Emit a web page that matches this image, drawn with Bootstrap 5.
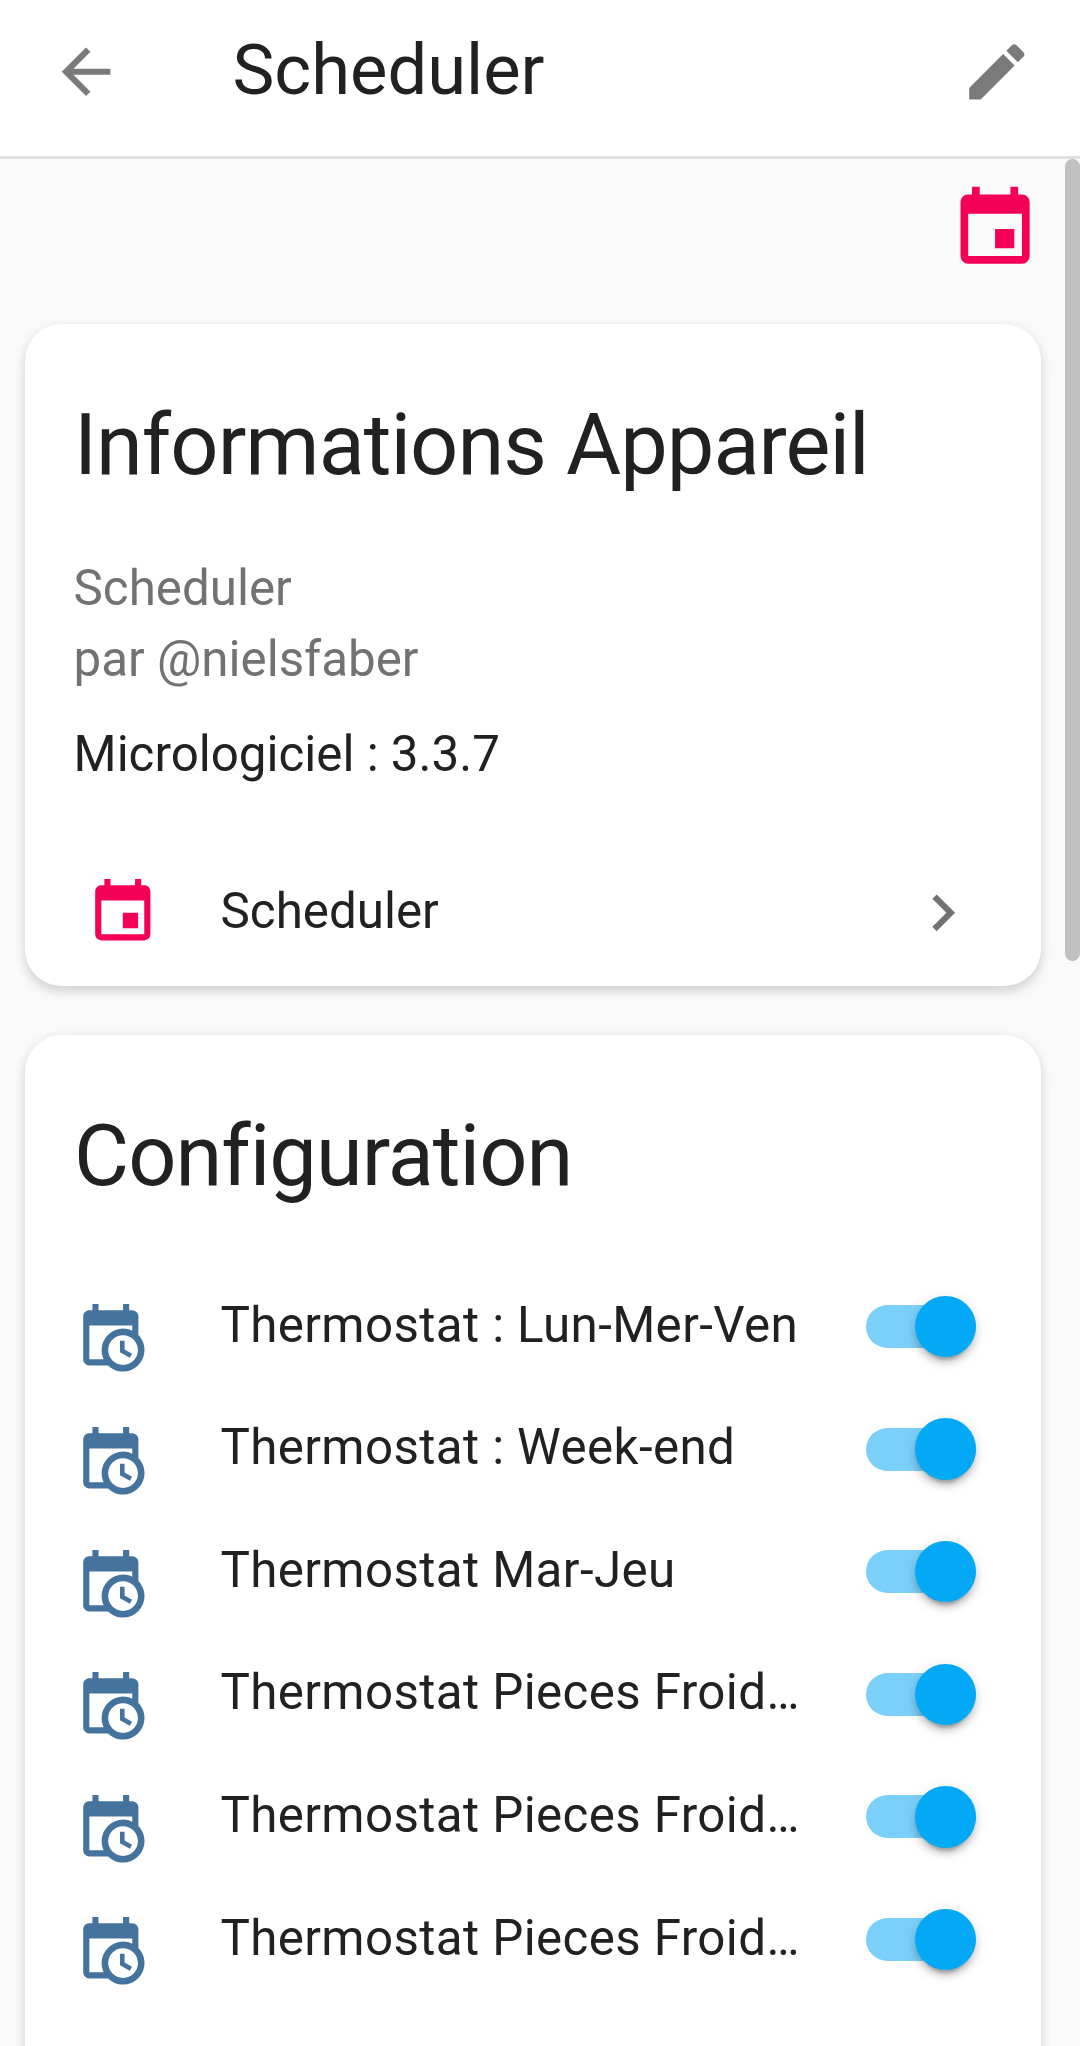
<!DOCTYPE html>
<html lang="fr">
<head>
<meta charset="utf-8">
<meta name="viewport" content="width=device-width, initial-scale=1">
<title>Scheduler</title>
<link href="https://cdn.jsdelivr.net/npm/bootstrap@5.3.0/dist/css/bootstrap.min.css" rel="stylesheet">
<style>
  body { font-family: Roboto, "Noto Sans", sans-serif; color: #212121; background: #fafafa; height: 2046px; font-size: 49.3px; line-height: 71px; }
  .topbar { height: 159px; border-bottom: 3px solid #e0e0e0; padding: 34.8px 46.7px 0 49.2px; }
  .topbar-title { font-size: 70.5px; line-height: 72px; margin: -1px 0 0 109.7px; }
  .glyph { width: 73.6px; height: 73.6px; fill: currentColor; flex: none; }
  .glyph-lg { width: 92.2px; height: 92.2px; }
  .soft { color: #7a7a7a; }
  .muted-text { color: #727272; }
  .pink { color: #f50057; }
  .steel { color: #44739e; }
  .page-body { height: 1887px; }
  .column-area { width: 1065px; padding: 0 24px 0 25px; }
  .integration-icon { height: 165px; padding-top: 23.7px; }
  .panel { background: #fff; border-radius: 36.8px; padding-top: 71px; box-shadow: 0 6px 12px rgba(0,0,0,.13), 0 2px 12px rgba(0,0,0,.06); }
  .panel + .panel { margin-top: 49px; }
  .panel-title { font-size: 84.7px; line-height: 100px; font-weight: 400; letter-spacing: -.0115em; padding-left: 49px; margin: 0; }
  .about { padding: 58px 48.6px 0; }
  .firmware { margin-top: 24px; }
  .device-row { padding: 85.8px 61px 36.7px; }
  .device-name { margin: -2px 0 0 61px; }
  .entities { padding-top: 58.3px; }
  .entity { height: 122.6px; padding: 0 65px 0 48.8px; }
  .entity .glyph { margin-top: 25px; }
  .entity-name { margin: -1px 0 0 73px; width: 584px; letter-spacing: .0079em; }
  .toggle { width: 110.5px; height: 43px; border-radius: 22px; background: #7bd0fa; position: relative; margin-top: 1.5px; }
  .toggle::after { content: ""; position: absolute; right: 0; top: -9.2px; width: 61.4px; height: 61.4px; border-radius: 50%; background: #03a9f4;
    box-shadow: 0 9px 3px -6px rgba(0,0,0,.2), 0 6px 6px rgba(0,0,0,.14), 0 3px 15px rgba(0,0,0,.12); }
  .scroll-thumb { width: 15px; height: 802px; border-radius: 8px; background: #c1c1c1; }
</style>
<script src="https://cdn.jsdelivr.net/npm/bootstrap@5.3.0/dist/js/bootstrap.bundle.min.js"></script>
</head>
<body class="overflow-hidden">
<svg class="d-none">
  <symbol id="calendar" viewBox="0 0 24 24"><path d="M19,19H5V8H19M16,1V3H8V1H6V3H5C3.89,3 3,3.89 3,5V19A2,2 0 0,0 5,21H19A2,2 0 0,0 21,19V5C21,3.89 20.1,3 19,3H18V1M17,12H12V17H17V12Z"/></symbol>
  <symbol id="calendar-clock" viewBox="0 0 24 24"><path d="M15,13H16.5V15.82L18.94,17.23L18.19,18.53L15,16.69V13M19,8H5V19H9.67C9.24,18.09 9,17.07 9,16A7,7 0 0,1 16,9C17.07,9 18.09,9.24 19,9.67V8M5,21C3.89,21 3,20.1 3,19V5C3,3.89 3.89,3 5,3H6V1H8V3H16V1H18V3H19A2,2 0 0,1 21,5V11.1C22.24,12.36 23,14.09 23,16A7,7 0 0,1 16,23C14.09,23 12.36,22.24 11.1,21H5M16,11.15A4.85,4.85 0 0,0 11.15,16C11.15,18.68 13.32,20.85 16,20.85A4.85,4.85 0 0,0 20.85,16C20.85,13.32 18.68,11.15 16,11.15Z"/></symbol>
</svg>

<header class="topbar d-flex align-items-start bg-white">
  <svg class="glyph soft" viewBox="0 0 24 24"><path d="M20,11V13H8L13.5,18.5L12.08,19.92L4.16,12L12.08,4.08L13.5,5.5L8,11H20Z"/></svg>
  <div class="topbar-title flex-grow-1">Scheduler</div>
  <svg class="glyph soft" viewBox="0 0 24 24"><path d="M20.71,7.04C21.1,6.65 21.1,6 20.71,5.63L18.37,3.29C18,2.9 17.35,2.9 16.96,3.29L15.12,5.12L18.87,8.87M3,17.25V21H6.75L17.81,9.93L14.06,6.18L3,17.25Z"/></svg>
</header>

<div class="page-body d-flex">
  <main class="column-area flex-shrink-0">
    <div class="integration-icon d-flex justify-content-end">
      <svg class="glyph glyph-lg pink"><use href="#calendar"/></svg>
    </div>

    <section class="panel">
      <h1 class="panel-title">Informations Appareil</h1>
      <div class="about">
        <div class="muted-text">Scheduler</div>
        <div class="muted-text">par @nielsfaber</div>
        <div class="firmware">Micrologiciel : 3.3.7</div>
      </div>
      <div class="device-row d-flex align-items-center">
        <svg class="glyph pink"><use href="#calendar"/></svg>
        <div class="device-name flex-grow-1">Scheduler</div>
        <svg class="glyph muted-text" viewBox="0 0 24 24"><path d="M8.59,16.58L13.17,12L8.59,7.41L10,6L16,12L10,18L8.59,16.58Z"/></svg>
      </div>
    </section>

    <section class="panel">
      <h1 class="panel-title">Configuration</h1>
      <div class="entities">
        <div class="entity d-flex align-items-center"><svg class="glyph steel"><use href="#calendar-clock"/></svg><div class="entity-name text-truncate">Thermostat : Lun-Mer-Ven</div><div class="toggle ms-auto" role="switch" aria-checked="true"></div></div>
        <div class="entity d-flex align-items-center"><svg class="glyph steel"><use href="#calendar-clock"/></svg><div class="entity-name text-truncate">Thermostat : Week-end</div><div class="toggle ms-auto" role="switch" aria-checked="true"></div></div>
        <div class="entity d-flex align-items-center"><svg class="glyph steel"><use href="#calendar-clock"/></svg><div class="entity-name text-truncate">Thermostat Mar-Jeu</div><div class="toggle ms-auto" role="switch" aria-checked="true"></div></div>
        <div class="entity d-flex align-items-center"><svg class="glyph steel"><use href="#calendar-clock"/></svg><div class="entity-name text-truncate">Thermostat Pieces Froid…</div><div class="toggle ms-auto" role="switch" aria-checked="true"></div></div>
        <div class="entity d-flex align-items-center"><svg class="glyph steel"><use href="#calendar-clock"/></svg><div class="entity-name text-truncate">Thermostat Pieces Froid…</div><div class="toggle ms-auto" role="switch" aria-checked="true"></div></div>
        <div class="entity d-flex align-items-center"><svg class="glyph steel"><use href="#calendar-clock"/></svg><div class="entity-name text-truncate">Thermostat Pieces Froid…</div><div class="toggle ms-auto" role="switch" aria-checked="true"></div></div>
        <div class="entity"></div>
      </div>
    </section>
  </main>
  <div class="scroll-thumb flex-shrink-0"></div>
</div>
</body>
</html>
